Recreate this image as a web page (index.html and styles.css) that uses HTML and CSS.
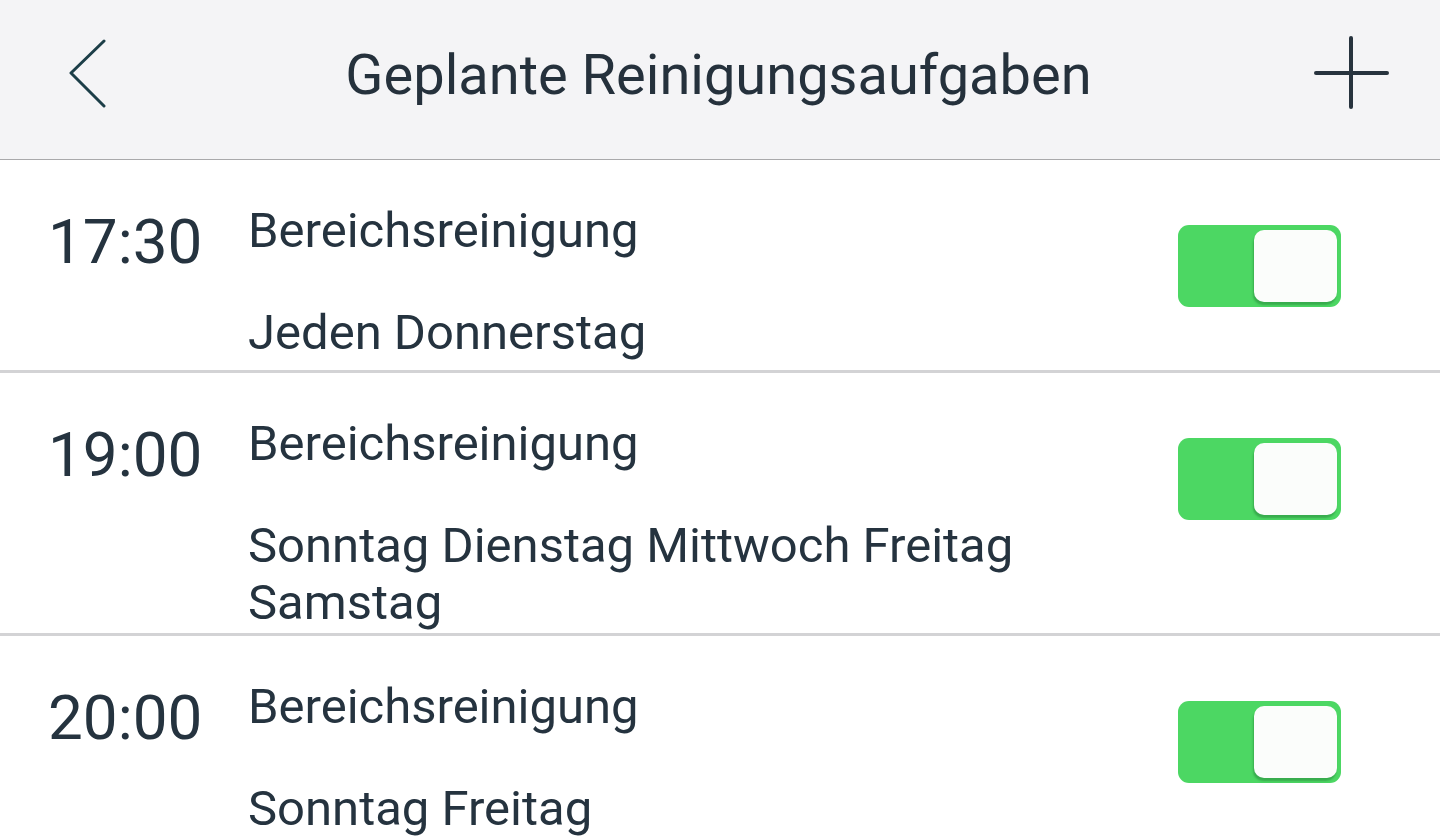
FILE: index.html
```html
<!DOCTYPE html>
<html lang="de">
<head>
  <meta charset="UTF-8">
  <meta name="viewport" content="width=device-width, initial-scale=1.0">
  <title>Geplante Reinigungsaufgaben</title>
  <link rel="stylesheet" href="styles.css">
</head>
<body>
  <div class="header">
    <button class="icon-btn back" aria-label="Zurück">
      <svg width="40" height="70" viewBox="0 0 40 70">
        <polyline points="36,3 3,35 36,68" fill="none" stroke="#1c3e48" stroke-width="3" stroke-linecap="round" stroke-linejoin="round"/>
      </svg>
    </button>
    <h1 class="title">Geplante Reinigungsaufgaben</h1>
    <button class="icon-btn add" aria-label="Hinzufügen">
      <svg width="76" height="74" viewBox="0 0 76 74">
        <line x1="37" y1="2" x2="37" y2="71" stroke="#27333e" stroke-width="4" stroke-linecap="round"/>
        <line x1="2" y1="37" x2="73" y2="37" stroke="#27333e" stroke-width="4" stroke-linecap="round"/>
      </svg>
    </button>
  </div>

  <div class="list">
    <div class="task">
      <div class="time">17:30</div>
      <div class="info">
        <div class="name">Bereichsreinigung</div>
        <div class="days">Jeden Donnerstag</div>
      </div>
      <div class="toggle on"><span class="knob"></span></div>
    </div>

    <div class="task">
      <div class="time">19:00</div>
      <div class="info">
        <div class="name">Bereichsreinigung</div>
        <div class="days">Sonntag Dienstag Mittwoch Freitag Samstag</div>
      </div>
      <div class="toggle on"><span class="knob"></span></div>
    </div>

    <div class="task">
      <div class="time">20:00</div>
      <div class="info">
        <div class="name">Bereichsreinigung</div>
        <div class="days">Sonntag Freitag</div>
      </div>
      <div class="toggle on"><span class="knob"></span></div>
    </div>
  </div>
</body>
</html>
```

FILE: styles.css
```css
body {
  margin: 0;
  font-family: Roboto, "Noto Sans", sans-serif;
  background-color: #ffffff;
  color: #25333f;
  overflow: hidden;
}
.header {
  height: 145px;
  display: flex;
  align-items: center;
  justify-content: space-between;
  background-color: #f4f4f6;
  border-bottom: 1px solid #a9a9ab;
  padding: 0 50px 14px 68px;
}
.icon-btn {
  background: none;
  border: none;
  padding: 0;
  display: flex;
  cursor: pointer;
}
.title {
  margin: 0 0 0 15px;
  font-size: 56px;
  font-weight: 400;
  color: #25313c;
  padding-top: 4px;
}
.task {
  display: flex;
  align-items: flex-start;
  min-height: 213px;
  padding: 0 99px 2px 48px;
  border-bottom: 3px solid #d3d3d5;
  box-sizing: border-box;
}
.task:last-child {
  border-bottom: none;
}
.time {
  width: 200px;
  flex-shrink: 0;
  font-size: 62px;
  margin-top: 45px;
}
.info {
  flex: 1;
  padding-top: 42px;
  font-size: 49px;
  line-height: 57px;
}
.days {
  margin-top: 45px;
  max-width: 820px;
}
.toggle {
  width: 163px;
  height: 82px;
  margin-top: 65px;
  border-radius: 11px;
  background-color: #4cd763;
  position: relative;
  flex-shrink: 0;
}
.knob {
  position: absolute;
  top: 5px;
  right: 4px;
  width: 83px;
  height: 72px;
  border-radius: 10px;
  background-color: #fbfdfb;
  box-shadow: -1px 3px 2px rgba(30, 120, 50, 0.45);
}
```
